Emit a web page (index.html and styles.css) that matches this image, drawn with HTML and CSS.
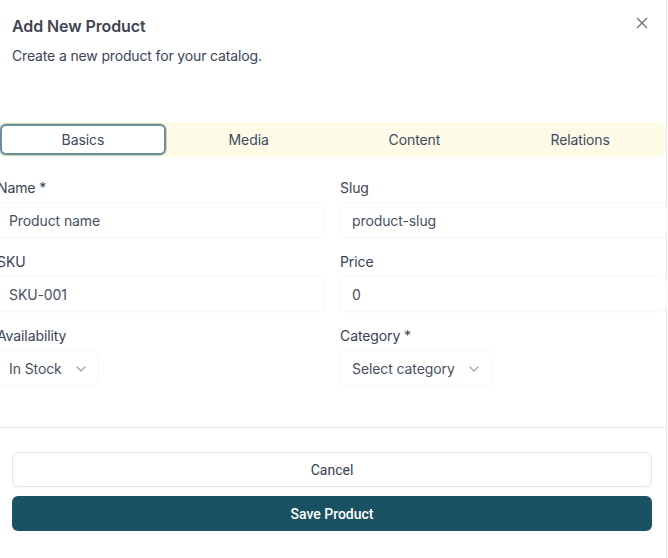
FILE: index.html
```html
<!DOCTYPE html>
<html>
<head>
<meta charset="utf-8">
<link rel="stylesheet" href="styles.css">
</head>
<body>
<div class="dialog">
  <header class="head">
    <h1 class="title">Add New Product</h1>
    <p class="desc">Create a new product for your catalog.</p>
    <button class="close" aria-label="Close">
      <svg width="12" height="12" viewBox="0 0 12 12"><path d="M1.5 1.5l9 9M10.5 1.5l-9 9" stroke="#6b7280" stroke-width="1.4" stroke-linecap="round"/></svg>
    </button>
  </header>
  <div class="body">
    <div class="tabs">
      <div class="tab active">Basics</div>
      <div class="tab">Media</div>
      <div class="tab">Content</div>
      <div class="tab">Relations</div>
    </div>
    <div class="grid">
      <div class="field">
        <label class="label">Name *</label>
        <div class="input placeholder">Product name</div>
      </div>
      <div class="field">
        <label class="label">Slug</label>
        <div class="input placeholder">product-slug</div>
      </div>
      <div class="field">
        <label class="label">SKU</label>
        <div class="input placeholder">SKU-001</div>
      </div>
      <div class="field">
        <label class="label">Price</label>
        <div class="input placeholder">0</div>
      </div>
      <div class="field">
        <label class="label">Availability</label>
        <div class="select">In Stock
          <svg class="chev" width="10" height="6" viewBox="0 0 10 6"><path d="M1 1l4 4 4-4" fill="none" stroke="#9ca3af" stroke-width="1.2" stroke-linecap="round" stroke-linejoin="round"/></svg>
        </div>
      </div>
      <div class="field">
        <label class="label">Category *</label>
        <div class="select">Select category
          <svg class="chev" width="10" height="6" viewBox="0 0 10 6"><path d="M1 1l4 4 4-4" fill="none" stroke="#9ca3af" stroke-width="1.2" stroke-linecap="round" stroke-linejoin="round"/></svg>
        </div>
      </div>
    </div>
  </div>
  <footer class="foot">
    <button class="btn cancel">Cancel</button>
    <button class="btn save">Save Product</button>
  </footer>
</div>
</body>
</html>
```
FILE: styles.css
```css
* { box-sizing: border-box; }
html, body { margin: 0; padding: 0; background: #fff; overflow: hidden; }
body { width: 668px; height: 558px; font-family: Inter, "Noto Sans", sans-serif; color: #3b4252; }

.dialog {
  width: 667px;
  height: 558px;
  border-right: 1px solid #e5e7eb;
  display: flex;
  flex-direction: column;
}

.head { position: relative; padding: 16px 12px 0 12px; }
.title { margin: 0; font-size: 16px; font-weight: 600; color: #3f4452; line-height: 20px; letter-spacing: -0.1px; }
.desc { margin: 10px 0 0; font-size: 14px; color: #3b4556; line-height: 20px; letter-spacing: -0.15px; }
.close {
  position: absolute; right: 18px; top: 17px;
  border: 0; background: none; padding: 0; width: 12px; height: 12px; display: flex;
}

.body { margin: 56px 0 0 -3px; width: 670px; }

.tabs {
  display: grid; grid-template-columns: repeat(4, 1fr);
  background: #fdfae7; border-radius: 8px; padding: 2px 3px;
  height: 35px; width: 669px;
}
.tab {
  display: flex; align-items: center; justify-content: center;
  font-size: 14px; color: #3f4a5c; letter-spacing: -0.1px;
}
.tab.active {
  background: #fff; border: 2px solid #6f8e9b; border-radius: 6px;
  box-shadow: 0 0 0 1px #c9d3c8;
}

.grid {
  display: grid; grid-template-columns: 327px 326px; column-gap: 16px; row-gap: 16px;
  margin-top: 22px;
}
.field { display: flex; flex-direction: column; gap: 7px; }
.label { font-size: 14px; color: #3b4252; line-height: 17px; letter-spacing: -0.1px; }
.input, .select {
  height: 34px; border-radius: 6px; background: #fff;
  box-shadow: 0 0 0 1px #f7f8fa, 0 1px 2px rgba(0,0,0,0.035);
  display: flex; align-items: center; padding: 0 12px;
  font-size: 14px; color: #48505e; letter-spacing: -0.1px;
}
.select { align-self: flex-start; gap: 14px; }
.chev { margin-top: 1px; }

.foot {
  margin-top: 42px; border-top: 1px solid #e5e7eb;
  padding: 24px 15px 0 12px; display: flex; flex-direction: column; gap: 9px;
}
.btn {
  height: 35px; width: 640px; border-radius: 6px; font-family: Roboto, sans-serif; font-size: 14px;
  display: flex; align-items: center; justify-content: center; cursor: pointer;
}
.cancel { background: #fff; border: 1px solid #e2e5ee; color: #374151; box-shadow: 0 1px 2px rgba(0,0,0,0.04); }
.save { background: #1a5163; border: 0; color: #fff; font-weight: 500; }
```
